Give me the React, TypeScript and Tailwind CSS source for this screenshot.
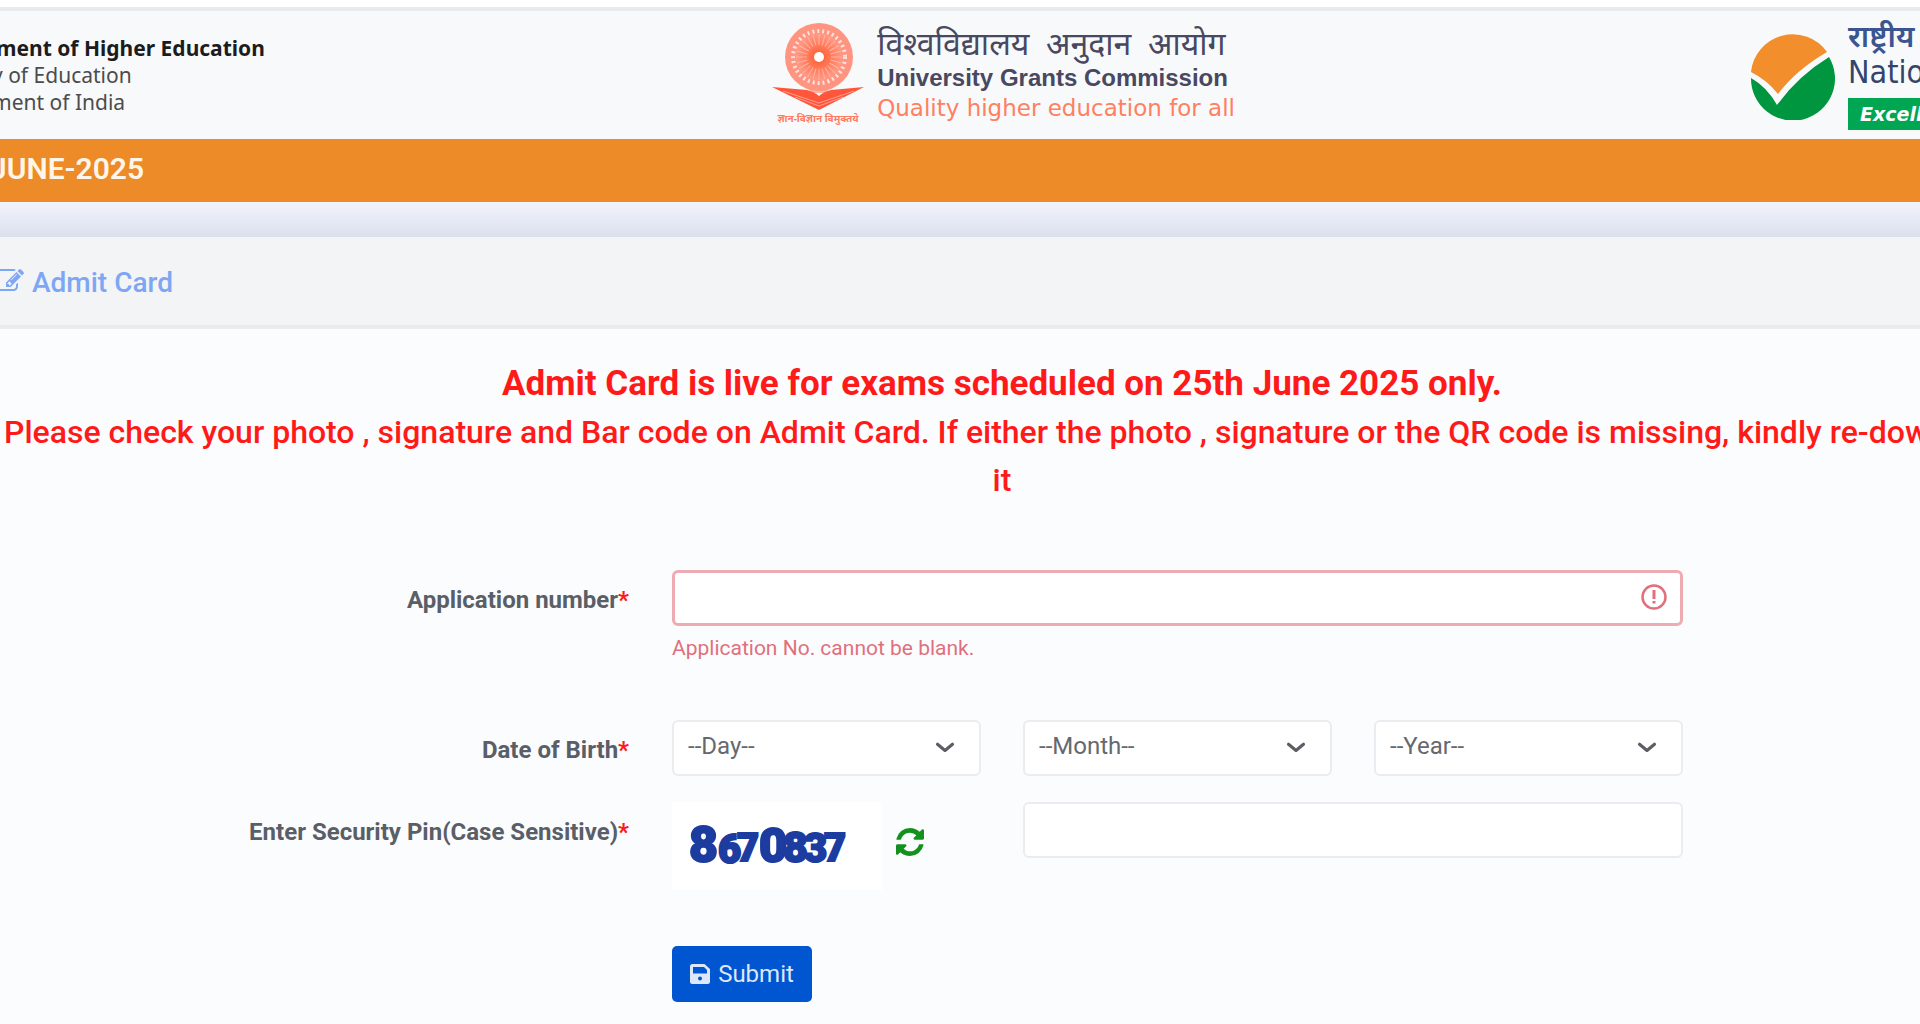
import React from "react";

function EditIcon({ className }: { className?: string }) {
  return (
    <svg viewBox="0 0 1792 1792" fill="currentColor" className={className} aria-hidden="true">
      <path d="M888 1184l116-116-152-152-116 116v56h96v96h56zm440-720q-16-16-33 1l-350 350q-17 17-1 33t33-1l350-350q17-17 1-33zm80 594v190q0 119-84.5 203.5t-203.5 84.5h-832q-119 0-203.5-84.5t-84.5-203.5v-832q0-119 84.5-203.5t203.5-84.5h832q63 0 117 25 15 7 18 23 3 17-9 29l-49 49q-14 14-32 8-23-6-45-6h-832q-66 0-113 47t-47 113v832q0 66 47 113t113 47h832q66 0 113-47t47-113v-126q0-13 9-22l64-64q15-15 35-7t20 29zm-96-738l288 288-672 672h-288v-288zm444 132l-92 92-288-288 92-92q28-28 68-28t68 28l152 152q28 28 28 68t-28 68z" />
    </svg>
  );
}

function SaveIcon({ className }: { className?: string }) {
  return (
    <svg viewBox="0 0 20 20" fill="currentColor" fillRule="evenodd" className={className} aria-hidden="true">
      <path d="M2.5 0H14.5L20 5V17.5Q20 20 17.5 20H2.5Q0 20 0 17.5V2.5Q0 0 2.5 0ZM3 3V9.5H17V6L14 3ZM10 12.5A2 2 0 1 0 10 16.5A2 2 0 1 0 10 12.5Z" />
    </svg>
  );
}

function RefreshIcon({ className }: { className?: string }) {
  return (
    <svg viewBox="0 128 1536 1536" fill="currentColor" className={className} aria-hidden="true">
      <path d="M1511 1056q0 5 -1 7q-64 268 -268 434.5t-478 166.5q-146 0 -282.5 -55t-243.5 -157l-129 129q-19 19 -45 19t-45 -19t-19 -45v-448q0 -26 19 -45t45 -19h448q26 0 45 19t19 45t-19 45l-137 137q71 66 161 102t187 36q134 0 250 -65t186 -179q11 -17 53 -117q8 -23 30 -23h192q13 0 22.5 9.5t9.5 22.5zM1536 256v448q0 26 -19 45t-45 19h-448q-26 0 -45 -19t-19 -45t19 -45l138 -138q-148 -137 -349 -137q-134 0 -250 65t-186 179q-11 17 -53 117q-8 23 -30 23h-199q-13 0 -22.5 -9.5t-9.5 -22.5v-7q65 -268 270 -434.5t480 -166.5q146 0 284 55.5t245 156.5l130 -129q19 -19 45 -19t45 19t19 45z" />
    </svg>
  );
}

function UgcEmblem() {
  const rays = Array.from({ length: 24 }, (_, i) => i * 15);
  return (
    <svg viewBox="0 0 94 106" className="h-[106px] w-[94px] shrink-0" aria-hidden="true">
      <defs>
        <radialGradient id="wheel">
          <stop offset="0" stopColor="#ff5a22" />
          <stop offset="0.4" stopColor="#ff7350" />
          <stop offset="1" stopColor="#ff9a86" />
        </radialGradient>
      </defs>
      <path d="M34 60H62L56 70H40Z" fill="#ffb4a5" />
      <circle cx="48" cy="34" r="34" fill="#ff9480" />
      <circle cx="48" cy="34" r="26" fill="none" stroke="#ffe3dc" strokeWidth="4" strokeDasharray="2 3" />
      <circle cx="48" cy="34" r="23" fill="url(#wheel)" />
      {rays.map((a) => (
        <line key={a} x1="48" y1="22" x2="48" y2="11" stroke="#ffb3a2" strokeWidth="1" transform={`rotate(${a} 48 34)`} />
      ))}
      <circle cx="48" cy="34" r="5" fill="#fff" />
      <path d="M1 64L36 67Q44 69 48 73Q52 69 60 67L93 64L48 87Z" fill="#ff553a" />
      <path d="M12 68L48 80L83 68M24 74L48 83L72 74" fill="none" stroke="#ff9f8d" strokeWidth="1" />
      <text x="47" y="99" textAnchor="middle" fontSize="10" fontWeight="700" fill="#ff7a63" fontFamily="'Noto Sans', sans-serif">
        ज्ञान-विज्ञान विमुक्तये
      </text>
    </svg>
  );
}

function NtaEmblem() {
  return (
    <svg viewBox="0 0 86 86" className="h-[86px] w-[86px] shrink-0" aria-hidden="true">
      <path d="M1 38A42 42 0 0 1 77 18Q46 36 28 60Q17 46 1 38Z" fill="#f28e2b" />
      <path d="M1 44Q17 53 27 71Q48 42 79 23A42 42 0 1 1 1 44Z" fill="#009640" />
    </svg>
  );
}

function Label({ htmlFor, children }: { htmlFor: string; children: React.ReactNode }) {
  return (
    <label htmlFor={htmlFor} className="pt-4 text-right text-[24px] leading-7 font-bold text-[#5a5f67]">
      {children}
      <span className="text-[#ff1a1a]">*</span>
    </label>
  );
}

function DateSelect({ id, label }: { id: string; label: string }) {
  return (
    <div className="relative">
      <select
        id={id}
        aria-label={label}
        className="h-14 w-full appearance-none rounded-md border-2 border-[#eaecef] bg-white px-3.5 pb-1 text-[24px] text-[#65696e]"
      >
        <option>--{label}--</option>
      </select>
      <svg viewBox="0 0 16 16" className="pointer-events-none absolute top-[18px] right-[26px] size-5" aria-hidden="true">
        <path d="m2 5 6 5 6-5" fill="none" stroke="#5b5f64" strokeWidth="2.5" strokeLinecap="round" strokeLinejoin="round" />
      </svg>
    </div>
  );
}

const captcha = [
  { d: "8", x: 17, y: 60, s: 50 },
  { d: "6", x: 46, y: 61, s: 40 },
  { d: "7", x: 65, y: 59, s: 38 },
  { d: "0", x: 87, y: 60, s: 49 },
  { d: "8", x: 111, y: 60, s: 43 },
  { d: "3", x: 132, y: 60, s: 40 },
  { d: "7", x: 152, y: 59, s: 38 },
];

export default function App() {
  return (
    <div className="min-h-screen overflow-hidden bg-[#fbfcfe] font-[Roboto,sans-serif]">
      <div className="h-[7px] bg-white" />
      <header className="grid h-[132px] grid-cols-[minmax(0,770fr)_auto_minmax(0,684fr)] items-start overflow-hidden border-t-4 border-[#e9eaeb] bg-[#f8f9fb]">
        <div className="pt-6 font-['Noto_Sans',sans-serif] text-[21px] leading-[27px] whitespace-nowrap text-[#4c4c4c]">
          <p className="-ml-1 font-bold text-[#1c1c1c]">ment of Higher Education</p>
          <p className="-ml-2">y of Education</p>
          <p className="-ml-2">ment of India</p>
        </div>
        <div className="flex items-start gap-3 pt-3">
          <UgcEmblem />
          <div className="whitespace-pre text-[#484860]">
            <p className="font-['Noto_Sans',sans-serif] text-[32px] leading-[40px]">विश्वविद्यालय  अनुदान  आयोग</p>
            <p className="font-['Liberation_Sans',sans-serif] text-[24px] leading-[30px] font-bold">University Grants Commission</p>
            <p className="font-['DejaVu_Sans',sans-serif] text-[23px] leading-[30px] text-[#ff8060]">Quality higher education for all</p>
          </div>
        </div>
        <div className="flex w-[170px] items-start gap-3 justify-self-end pt-[23px]">
          <NtaEmblem />
          <div className="-mt-4 whitespace-nowrap">
            <p className="font-['Noto_Sans',sans-serif] text-[30px] leading-[36px] font-semibold text-[#3b5590]">राष्ट्रीय</p>
            <p className="font-['Liberation_Sans_Narrow','DejaVu_Sans_Condensed',sans-serif] text-[32px] leading-[36px] font-medium text-[#34456b]">Nation</p>
            <p className="mt-2 bg-[#00a651] px-3 font-['DejaVu_Sans',sans-serif] text-[19px] leading-8 font-bold text-white italic">Excelle</p>
          </div>
        </div>
      </header>
      <div className="flex h-[63px] items-center bg-[#ec8b27]">
        <h1 className="-ml-2.5 pb-1 text-[30px] font-semibold text-[#fff5e8]">JUNE-2025</h1>
      </div>
      <div className="h-[35px] bg-linear-to-b from-[#f2f4fb] to-[#dae0ed]" />
      <main>
        <div className="flex h-[92px] items-center border-b-4 border-[#e9ebed] bg-[#f3f4f6] text-[#7ea6f4]">
          <EditIcon className="-ml-1 size-7" />
          <h2 className="ml-2 pt-1 text-[28px] font-medium">Admit Card</h2>
        </div>
        <div className="mt-[31px] text-center leading-[48px] whitespace-nowrap text-[#ff1a1a]">
          <p className="pl-[84px] text-[35px] font-bold">Admit Card is live for exams scheduled on 25th June 2025 only.</p>
          <p className="pl-1 text-left text-[32px] font-medium">
            Please check your photo , signature and Bar code on Admit Card. If either the photo , signature or the QR code is missing, kindly re-dow
          </p>
          <p className="pl-[84px] text-[32px] font-medium">it</p>
        </div>
        <form className="mt-[66px] grid grid-cols-[minmax(0,629fr)_minmax(0,1011fr)_minmax(0,194fr)] gap-x-[43px]">
          <Label htmlFor="app">Application number</Label>
          <div className="h-[150px]">
            <div className="relative">
              <input id="app" className="h-14 w-full rounded-md border-3 border-[#efabb2] bg-white px-4 text-[24px]" />
              <svg viewBox="0 0 26 26" className="pointer-events-none absolute top-[14px] right-4 size-[26px]" fill="none" stroke="#e0707c" strokeWidth="2.5" aria-hidden="true">
                <circle cx="13" cy="13" r="11.5" />
                <path d="M13 6v9M13 17v2.5" strokeWidth="3" />
              </svg>
            </div>
            <p className="mt-2 text-[21px] leading-7 text-[#e0707c]">Application No. cannot be blank.</p>
          </div>
          <span />
          <Label htmlFor="day">Date of Birth</Label>
          <div className="grid h-[82px] grid-cols-3 gap-[42px]">
            <DateSelect id="day" label="Day" />
            <DateSelect id="month" label="Month" />
            <DateSelect id="year" label="Year" />
          </div>
          <span />
          <Label htmlFor="pin">Enter Security Pin(Case Sensitive)</Label>
          <div className="grid h-[144px] grid-cols-3 gap-[42px]">
            <div className="flex items-start gap-3.5">
              <svg viewBox="0 0 210 88" className="h-[88px] w-[210px] bg-white" role="img" aria-label="Security pin">
                {captcha.map((c, i) => (
                  <text key={i} x={c.x} y={c.y} fontSize={c.s} fontWeight="900" fill="#1c3c9f" stroke="#1c3c9f" strokeWidth="2" fontFamily="Roboto, sans-serif">
                    {c.d}
                  </text>
                ))}
              </svg>
              <button type="button" aria-label="Refresh pin" className="mt-[26px] text-[#12911c]">
                <RefreshIcon className="size-7" />
              </button>
            </div>
            <input id="pin" className="col-span-2 h-14 rounded-md border-2 border-[#eaecef] bg-white px-4 text-[24px]" />
          </div>
          <span />
          <button type="button" className="col-start-2 flex h-14 w-[140px] items-center justify-center gap-2 rounded-[5px] bg-[#0055d0] text-[24px] text-[#dce8fa]">
            <SaveIcon className="size-5" />
            Submit
          </button>
        </form>
      </main>
    </div>
  );
}
